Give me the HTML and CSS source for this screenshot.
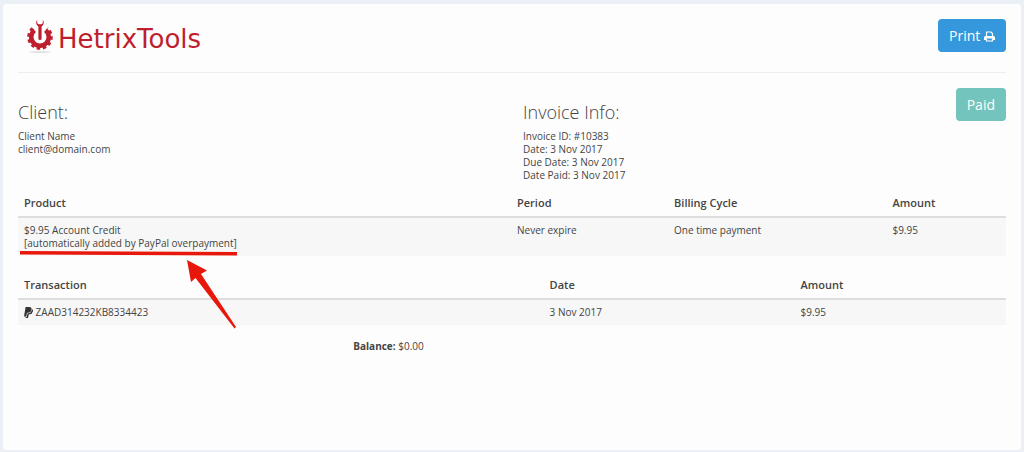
FILE: index.html
```
<!DOCTYPE html>
<html lang="en">
<head>
    <meta charset="UTF-8">
    <meta name="viewport" content="width=device-width, initial-scale=1.0">
    <title>Invoice #10383 - HetrixTools</title>
    <link rel="stylesheet" href="styles.css">
</head>
<body>
    <main class="invoice">
        <header class="invoice-header">
            <a href="#" class="logo">
                <svg class="logo-icon" viewBox="0 0 28 36" aria-hidden="true">
                    <ellipse cx="14" cy="33" rx="11" ry="1" fill="#e2e2e2"/>
                    <path d="M8.500 11.200A8.750 8.750 0 1 0 19.500 11.200" fill="none" stroke="#be1e2d" stroke-width="4.500"/>
                    <path d="M6.600 9.200A11.500 11.500 0 1 0 21.400 9.200" fill="none" stroke="#be1e2d" stroke-width="2.600" stroke-dasharray="3.500 2.650"/>
                    <path d="M11.200 1C9.700 2.500 9.800 5.800 12.400 7.300V19.500a1.600 1.600 0 0 0 3.200 0V7.300C18.200 5.800 18.300 2.500 16.800 1V4.200L15.300 5.300H12.700L11.200 4.200Z" fill="#be1e2d"/>
                </svg>
                <span class="logo-text">HetrixTools</span>
            </a>
            <button type="button" class="btn btn-print">
                Print
                <svg class="print-icon" viewBox="0 0 11 11" aria-hidden="true">
                    <path d="M2.500 5.500V1H7L8.500 2.500V5.500" fill="none" stroke="#fff" stroke-width="1.200"/>
                    <path d="M1.500 5H9.500Q11 5 11 6.500V9H9V7.500H2V9H0V6.500Q0 5 1.500 5Z" fill="#fff"/>
                    <path d="M2.500 7.500V10H8.500V7.500" fill="none" stroke="#fff" stroke-width="1.200"/>
                </svg>
            </button>
        </header>

        <section class="details">
            <div class="details-col">
                <h2>Client:</h2>
                <p>Client Name<br>client@domain.com</p>
            </div>
            <div class="details-col">
                <h2>Invoice Info:</h2>
                <p>Invoice ID: #10383<br>Date: 3 Nov 2017<br>Due Date: 3 Nov 2017<br>Date Paid: 3 Nov 2017</p>
            </div>
            <button type="button" class="btn btn-paid">Paid</button>
        </section>

        <table class="products">
            <thead>
                <tr>
                    <th class="col-product">Product</th>
                    <th class="col-period">Period</th>
                    <th class="col-cycle">Billing Cycle</th>
                    <th>Amount</th>
                </tr>
            </thead>
            <tbody>
                <tr>
                    <td>$9.95 Account Credit<br>[automatically added by PayPal overpayment]</td>
                    <td>Never expire</td>
                    <td>One time payment</td>
                    <td>$9.95</td>
                </tr>
            </tbody>
        </table>

        <table class="transactions">
            <thead>
                <tr>
                    <th class="col-transaction">Transaction</th>
                    <th class="col-date">Date</th>
                    <th>Amount</th>
                </tr>
            </thead>
            <tbody>
                <tr>
                    <td>
                        <svg class="paypal-icon" viewBox="0 0 9 11" role="img" aria-label="PayPal">
                            <path d="M1.600 0H5.200Q8 .2 7.500 2.700Q6.900 5.700 4 5.700H3L2.200 9.500H0Z" fill="#333"/>
                            <path d="M8.100 1.900Q9.300 3 8.900 4.600Q8.200 7.300 5.500 7.300H4.800L4 10.900H1.600L1.800 10H2.700L3.500 6.200H4.400Q7.500 6 8.100 1.900Z" fill="#333"/>
                        </svg>
                        ZAAD314232KB8334423
                    </td>
                    <td>3 Nov 2017</td>
                    <td>$9.95</td>
                </tr>
            </tbody>
        </table>

        <p class="balance"><strong>Balance:</strong> $0.00</p>

        <!-- underline and arrow on the credit line -->
        <svg class="annotation" viewBox="0 0 220 80" aria-hidden="true">
            <path d="M1 1L218 2V5.500L1 4.500Z"/>
            <path d="M168 10L188 20.500L182 24L217 77L215.500 78.500L176.500 28L172 32Z"/>
        </svg>
    </main>
</body>
</html>
```

FILE: styles.css
```
* {
    box-sizing: border-box;
}

body {
    margin: 0;
    padding: 4px 3px 2px;
    min-height: 100vh;
    display: flex;
    background-color: #ebf0f6;
    font-family: "Open Sans", sans-serif;
    font-size: 10px;
    line-height: 13px;
    color: #444;
}

.invoice {
    position: relative;
    flex: 1;
    padding: 15px;
    background-color: #fdfdfd;
    border-radius: 3px;
}

.invoice-header {
    display: flex;
    justify-content: space-between;
    align-items: flex-start;
    height: 54px;
    border-bottom: 1px solid #eee;
}

.logo {
    display: flex;
    align-items: center;
    gap: 4px;
    padding-left: 8px;
    color: #be1e2d;
    text-decoration: none;
}

.logo-icon {
    width: 28px;
    height: 36px;
}

.logo-text {
    padding-top: 4px;
    font-family: "DejaVu Sans", sans-serif;
    font-size: 26px;
    line-height: 32px;
}

.btn {
    height: 33px;
    padding: 0 11px;
    border: none;
    border-radius: 4px;
    font-family: inherit;
    font-size: 14px;
    color: #fff;
    cursor: pointer;
}

.btn-print {
    background-color: #3598dc;
}

.btn-paid {
    position: absolute;
    top: 15px;
    right: 0;
    background-color: #72c4bc;
}

.print-icon {
    width: 11px;
    height: 11px;
    vertical-align: -1px;
}

.details {
    position: relative;
    display: grid;
    grid-template-columns: 1fr 1fr;
    gap: 22px;
    padding: 27px 0 7px;
}

h2 {
    margin: 0 0 6px;
    font-size: 18px;
    font-weight: 300;
    line-height: 24px;
}

p {
    margin: 0;
}

table {
    width: 100%;
    margin-bottom: 15px;
    border-collapse: separate;
    border-spacing: 0;
    table-layout: fixed;
}

th,
td {
    padding: 6px;
    text-align: left;
    vertical-align: top;
}

th {
    border-bottom: 2px solid #ddd;
    font-size: 11px;
    font-weight: 600;
    line-height: 15px;
}

td {
    background-color: #f7f7f7;
}

.col-product {
    width: 49.9%;
}

.col-period {
    width: 15.9%;
}

.col-cycle {
    width: 22.1%;
}

.col-transaction {
    width: 53.2%;
}

.col-date {
    width: 25.4%;
}

.paypal-icon {
    width: 9px;
    height: 11px;
    vertical-align: -2px;
}

.balance {
    width: 75%;
    text-align: center;
}

.annotation {
    position: absolute;
    left: 16px;
    top: 246px;
    width: 220px;
    height: 80px;
    fill: #e8170c;
}
```
